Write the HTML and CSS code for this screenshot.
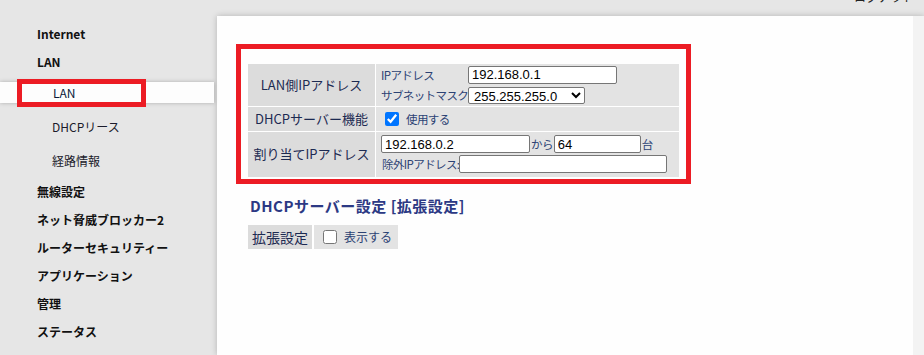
FILE: index.html
```html
<!DOCTYPE html>
<html lang="ja">
<head>
<meta charset="utf-8">
<title>LAN設定</title>
<link rel="stylesheet" href="styles.css">
</head>
<body>
<div class="topbar"><span class="toplink">ログアウト</span></div>
<div class="layout">
  <nav class="sidebar">
    <div class="nav-item">Internet</div>
    <div class="nav-item">LAN</div>
    <div class="nav-sub is-active"><span class="nav-label">LAN</span><span class="mark"></span></div>
    <div class="nav-sub">DHCPリース</div>
    <div class="nav-sub">経路情報</div>
    <div class="nav-item">無線設定</div>
    <div class="nav-item">ネット脅威ブロッカー2</div>
    <div class="nav-item">ルーターセキュリティー</div>
    <div class="nav-item">アプリケーション</div>
    <div class="nav-item">管理</div>
    <div class="nav-item">ステータス</div>
  </nav>
  <div class="main">
    <main class="panel">
      <div class="highlight">
        <table class="settings">
          <tr class="row-lan">
            <th>LAN側IPアドレス</th>
            <td>
              <div class="pair-grid">
                <span class="lbl">IPアドレス</span>
                <input class="ip-input" type="text" value="192.168.0.1">
                <span class="lbl">サブネットマスク</span>
                <select class="mask-select"><option>255.255.255.0</option></select>
              </div>
            </td>
          </tr>
          <tr class="row-dhcp">
            <th>DHCPサーバー機能</th>
            <td><label class="check"><input type="checkbox" checked><span class="lbl">使用する</span></label></td>
          </tr>
          <tr class="row-range">
            <th>割り当てIPアドレス</th>
            <td>
              <div class="range-line">
                <input class="ip-input" type="text" value="192.168.0.2"><span class="lbl">から</span><input class="num-input" type="text" value="64"><span class="lbl">台</span>
              </div>
              <div class="range-line">
                <span class="lbl">除外IPアドレス:</span><input class="ex-input" type="text" value="">
              </div>
            </td>
          </tr>
        </table>
      </div>
      <h2 class="section-title">DHCPサーバー設定 [拡張設定]</h2>
      <table class="ext">
        <tr>
          <th>拡張設定</th>
          <td><label class="check"><input type="checkbox"><span class="lbl">表示する</span></label></td>
        </tr>
      </table>
    </main>
    <div class="gutter"></div>
  </div>
</div>
</body>
</html>
```
FILE: styles.css
```css
html, body {
  margin: 0;
  padding: 0;
}
body {
  background: #e6e6e6;
  font-family: "Noto Sans CJK JP", "Noto Sans", sans-serif;
  color: #111;
  height: 355px;
  overflow: hidden;
}
.topbar {
  height: 16px;
  position: relative;
  overflow: hidden;
}
.toplink {
  position: absolute;
  right: 10px;
  top: -10px;
  font-size: 12px;
  line-height: 13px;
  color: #222;
}
.layout {
  display: flex;
  height: 339px;
}
.sidebar {
  width: 217px;
  flex: none;
  padding-top: 4px;
  box-sizing: border-box;
}
.nav-item {
  height: 28px;
  line-height: 28px;
  padding-left: 37px;
  font-size: 12px;
  font-weight: 700;
  color: #111;
  white-space: nowrap;
}
.nav-sub {
  height: 34px;
  line-height: 34px;
  padding-left: 52px;
  font-size: 12px;
  color: #1b1b2b;
  position: relative;
}
.nav-sub.is-active {
  height: 21px;
  line-height: 21px;
  margin: 6px 3px 7px 0;
  background: #fdfdfd;
  box-shadow: 0 0 4px rgba(0,0,0,0.25);
  color: #0a1a3a;
  padding-left: 53px;
}
.mark {
  position: absolute;
  left: 17px;
  top: -3px;
  width: 129px;
  height: 28px;
  border: 5px solid #ec1c24;
  box-sizing: border-box;
}
.main {
  flex: 1;
  display: flex;
  box-shadow: 0 0 6px rgba(0,0,0,0.22);
}
.panel {
  width: 696px;
  flex: none;
  background: #fefefe;
  padding: 28px 0 0 19px;
  box-sizing: border-box;
}
.gutter {
  flex: 1;
  background: #f3f3f3;
}
.highlight {
  width: 455px;
  height: 140px;
  box-sizing: border-box;
  border: 5px solid #ec1c24;
  padding: 15px 7px 2px 7px;
}
.settings {
  width: 431px;
  border-collapse: collapse;
  font-size: 12px;
  line-height: 16px;
}
.settings th, .settings td {
  border: 1px solid #ffffff;
  padding: 0;
}
.settings tr:first-child th, .settings tr:first-child td { border-top: none; }
.settings tr:last-child th, .settings tr:last-child td { border-bottom: none; }
.settings th:first-child { border-left: none; }
.settings td:last-child { border-right: none; }
.settings th {
  width: 127px;
  background: #dcdcdc;
  font-weight: 400;
  font-size: 13px;
  color: #1c2a52;
  text-align: center;
  white-space: nowrap;
}
.settings td {
  background: #e3e3e3;
  padding-left: 5px;
  color: #2c4274;
}
.row-lan { height: 42px; }
.row-dhcp { height: 25px; }
.row-range { height: 46px; }
.lbl {
  font-size: 11.5px;
  letter-spacing: -0.6px;
  color: #2c4274;
  line-height: 16px;
  white-space: nowrap;
}
.pair-grid {
  display: grid;
  grid-template-columns: 87px auto;
  row-gap: 3px;
  align-items: center;
}
input[type="text"], select {
  font-family: "Liberation Sans", Arial, sans-serif;
  font-size: 13px;
  color: #000;
  background: #fff;
  border: 1px solid #767676;
  border-radius: 2px;
  box-sizing: border-box;
  margin: 0;
  padding: 0 3px;
}
.ip-input {
  width: 149px;
  height: 18px;
}
.mask-select {
  width: 117px;
  height: 17px;
  padding: 0 0 0 1px;
}
.check {
  display: flex;
  align-items: center;
  gap: 7px;
}
.check input {
  margin: 0 0 0 4px;
  width: 14px;
  height: 14px;
  accent-color: #0075ff;
}
.row-range .range-line {
  display: flex;
  align-items: center;
  height: 18px;
}
.range-line + .range-line { margin-top: 2px; }
.num-input {
  width: 87px;
  height: 18px;
  margin-left: 1px !important;
}
.row-range .lbl { margin-left: 1px; }
.ex-input {
  width: 208px;
  height: 18px;
}
.section-title {
  margin: 12px 0 0 14px;
  font-size: 15px;
  font-weight: 700;
  color: #2c3984;
  line-height: 20px;
  letter-spacing: 0.5px;
}
.ext {
  margin: 9px 0 0 12px;
  border-collapse: separate;
  border-spacing: 0;
}
.ext th {
  height: 24px;
  padding: 0 4px;
  background: #dcdcdc;
  font-weight: 400;
  font-size: 14px;
  color: #1c2a52;
  border-right: 2px solid #fff;
}
.ext td {
  height: 24px;
  background: #e3e3e3;
  padding: 0 6px 0 5px;
}
.ext .check input { margin-left: 4px; }
.ext .lbl { font-size: 12px; letter-spacing: 0; }
```
